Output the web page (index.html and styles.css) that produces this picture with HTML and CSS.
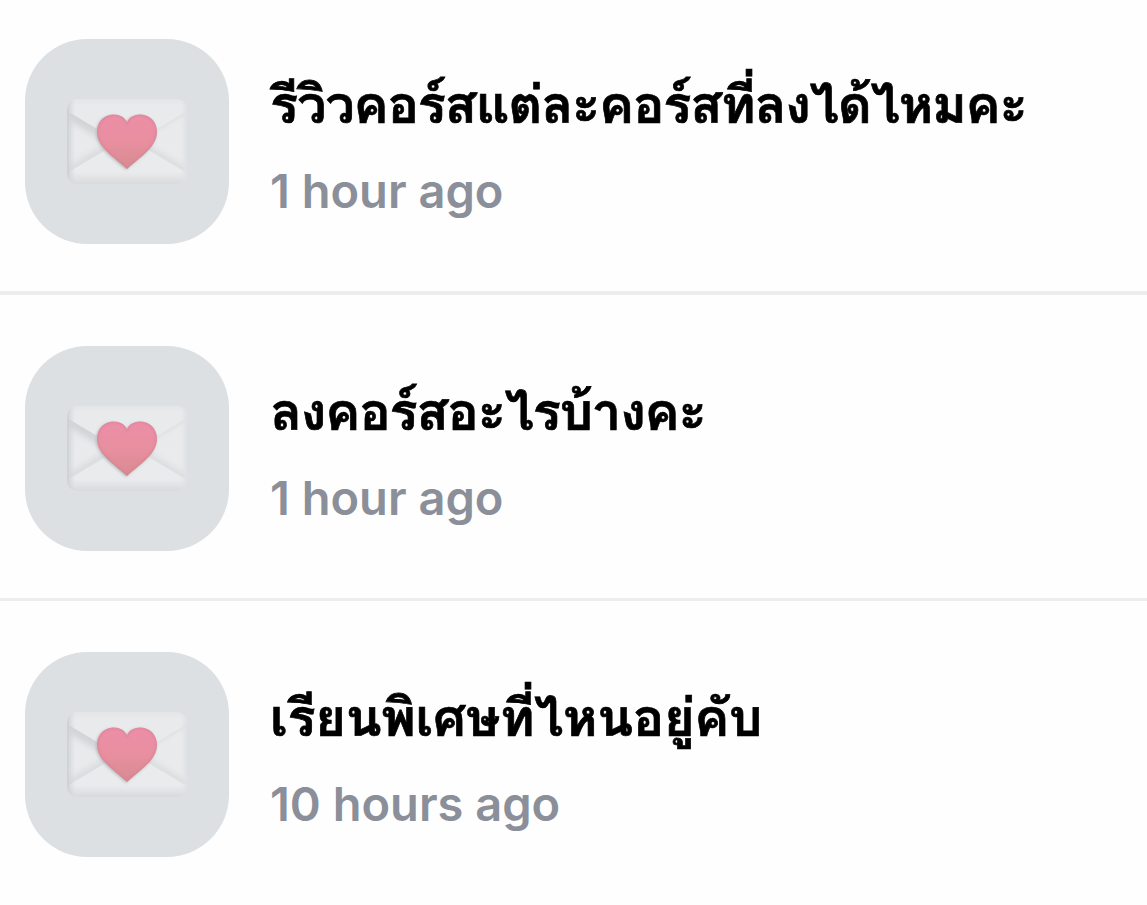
FILE: index.html
```html
<!DOCTYPE html>
<html lang="th">
<head>
<meta charset="utf-8">
<title>Messages</title>
<link rel="stylesheet" href="styles.css">
</head>
<body>
<svg class="defs" width="0" height="0" aria-hidden="true">
  <defs>
    <linearGradient id="paper" x1="0" y1="0" x2="0" y2="1">
      <stop offset="0" stop-color="#e3e5e6"/><stop offset=".08" stop-color="#e8eaeb"/><stop offset=".86" stop-color="#e9ebec"/><stop offset="1" stop-color="#d8dadc"/>
    </linearGradient>
    <linearGradient id="side" x1="0" y1="0" x2="1" y2="0">
      <stop offset="0" stop-color="#cdd0d2"/><stop offset=".07" stop-color="#d6d9db" stop-opacity="0"/><stop offset=".95" stop-color="#dfe2e4" stop-opacity="0"/><stop offset="1" stop-color="#dfe2e4"/>
    </linearGradient>
    <linearGradient id="heartFill" x1="0" y1="0" x2="0" y2="1">
      <stop offset="0" stop-color="#ec8ea8"/><stop offset=".5" stop-color="#e88f9f"/><stop offset="1" stop-color="#d78b91"/>
    </linearGradient>
    <filter id="soft" x="-20%" y="-20%" width="140%" height="140%"><feGaussianBlur stdDeviation="1.6"/></filter>
    <filter id="wide" x="-40%" y="-40%" width="180%" height="180%"><feGaussianBlur stdDeviation="3"/></filter>
    <filter id="edge" x="-20%" y="-20%" width="140%" height="140%"><feGaussianBlur stdDeviation=".8"/></filter>
    <clipPath id="envelopeShape"><rect width="120" height="85" rx="10"/></clipPath>
    <clipPath id="leftFold"><path d="M0 12L52 43L0 74Z"/></clipPath>
    <clipPath id="rightFold"><path d="M120 12L68 43L120 74Z"/></clipPath>
    <clipPath id="heartShape"><path d="M60 23.500C55 11 31 13 30 32C29.500 48 47 58 60 70C73 58 90.500 48 90 32C89 13 65 11 60 23.500Z"/></clipPath>
    <symbol id="loveLetter" viewBox="0 0 120 85">
      <g clip-path="url(#envelopeShape)">
        <rect width="120" height="85" fill="url(#paper)"/>
        <g clip-path="url(#leftFold)">
          <path d="M0 12L52 43" stroke="#d1d4d6" stroke-width="14" filter="url(#wide)"/>
          <path d="M0 74L52 43" stroke="#d9dcde" stroke-width="10" filter="url(#wide)"/>
        </g>
        <g clip-path="url(#rightFold)">
          <path d="M120 12L68 43" stroke="#e0e3e4" stroke-width="5" filter="url(#soft)"/>
          <path d="M120 74L68 43" stroke="#d9dcde" stroke-width="8" filter="url(#wide)"/>
        </g>
        <rect width="120" height="85" fill="url(#side)"/>
      </g>
      <path d="M60 23.500C55 11 31 13 30 32C29.500 48 47 58 60 70C73 58 90.500 48 90 32C89 13 65 11 60 23.500Z" fill="#b9bdc0" filter="url(#soft)" transform="translate(-1 1)"/>
      <path d="M60 23.500C55 11 31 13 30 32C29.500 48 47 58 60 70C73 58 90.500 48 90 32C89 13 65 11 60 23.500Z" fill="url(#heartFill)"/>
      <g clip-path="url(#heartShape)"><path d="M60 23.500C55 11 31 13 30 32C29.500 48 47 58 60 70C73 58 90.500 48 90 32C89 13 65 11 60 23.500Z" fill="none" stroke="#d47e91" stroke-width="2.500" opacity=".5" filter="url(#edge)"/></g>
    </symbol>
  </defs>
</svg>
<main class="inbox">
  <article class="message">
    <div class="tile"><svg class="letter" aria-hidden="true"><use href="#loveLetter"/></svg></div>
    <div class="body">
      <h2 class="title">รีวิวคอร์สแต่ละคอร์สที่ลงได้ไหมคะ</h2>
      <p class="time">1 hour ago</p>
    </div>
  </article>
  <article class="message">
    <div class="tile"><svg class="letter" aria-hidden="true"><use href="#loveLetter"/></svg></div>
    <div class="body">
      <h2 class="title">ลงคอร์สอะไรบ้างคะ</h2>
      <p class="time">1 hour ago</p>
    </div>
  </article>
  <article class="message">
    <div class="tile"><svg class="letter" aria-hidden="true"><use href="#loveLetter"/></svg></div>
    <div class="body">
      <h2 class="title title-tutoring">เรียนพิเศษที่ไหนอยู่คับ</h2>
      <p class="time">10 hours ago</p>
    </div>
  </article>
</main>
</body>
</html>
```
FILE: styles.css
```css
body {
  margin: 0;
  background: #fefefe;
  overflow: hidden;
}
.defs {
  display: block;
}
.inbox {
  display: flex;
  flex-direction: column;
}
.message {
  box-sizing: border-box;
  display: flex;
  align-items: flex-start;
  gap: 41px;
  height: 306px;
  padding: 51px 0 0 25px;
  border-bottom: 3px solid #ededed;
}
.message:first-child {
  height: 295px;
  padding-top: 39px;
  border-bottom-width: 4px;
}
.message:last-child {
  height: 304px;
  border-bottom: 0;
}
.tile {
  flex: none;
  display: grid;
  place-items: center;
  width: 204px;
  height: 204.5px;
  border-radius: 62px;
  background: #dce0e3;
}
.letter {
  width: 120px;
  height: 85px;
}
.body {
  display: flex;
  flex-direction: column;
  padding-top: 28px;
}
.title {
  margin: 0;
  height: 76px;
  font: 600 52.5px/76px "Loma", "Garuda", "Waree", "Umpush", "Sarabun", "Noto Sans Thai Looped", "Noto Sans Thai", "Noto Sans", sans-serif;
  letter-spacing: -1.2px;
  color: #000;
  white-space: nowrap;
  -webkit-text-stroke: 0.7px #000;
}
.title-tutoring {
  letter-spacing: -0.4px;
}
.time {
  margin: 23px 0 0;
  height: 50px;
  font: 600 47px/50px Inter, sans-serif;
  color: #8a8f99;
  white-space: nowrap;
}
```
